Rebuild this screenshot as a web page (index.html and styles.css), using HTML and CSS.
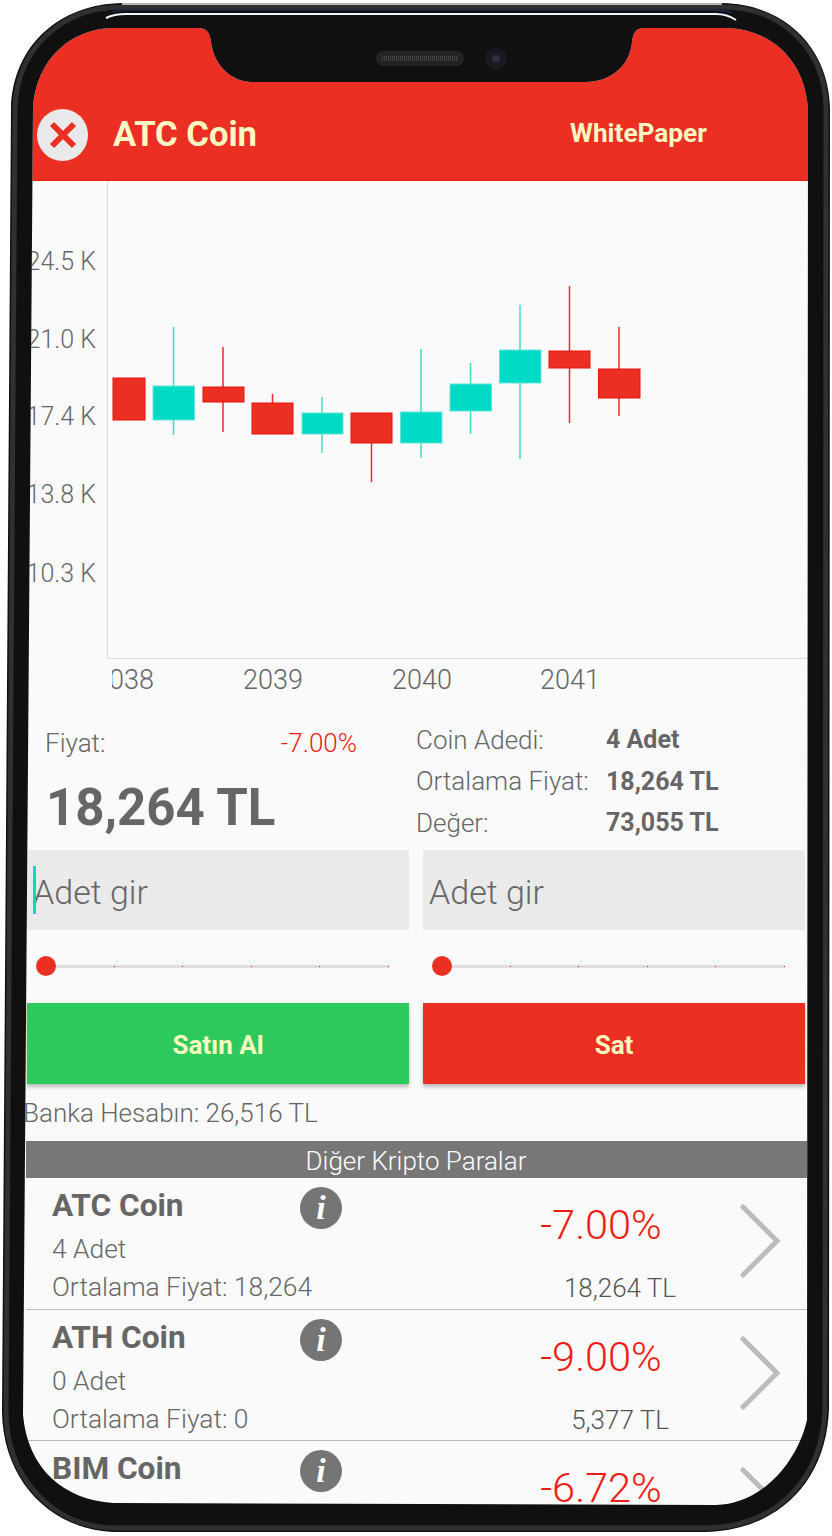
FILE: index.html
```html
<!DOCTYPE html>
<html lang="tr">

<head>
    <meta charset="UTF-8">
    <meta name="viewport" content="width=device-width, initial-scale=1.0">
    <title>ATC Coin</title>
    <link rel="stylesheet" href="styles.css">
</head>

<body>
    <div class="phone">
        <div class="screen">
            <div class="header">
                <div class="close">
                    <svg width="30" height="30" viewBox="0 0 30 30">
                        <path class="close-x" d="M4 4 L26 26 M26 4 L4 26" />
                    </svg>
                </div>
                <div class="title">ATC Coin</div>
                <div class="paper">WhitePaper</div>
            </div>

            <svg class="chart" width="832" height="519" viewBox="0 181 832 519">
                <defs>
                    <clipPath id="xclip">
                        <rect x="112" y="660" width="700" height="40" />
                    </clipPath>
                </defs>
                <path class="axis" d="M107.5 181 V658.5 H808" />

                <text class="ylabel" x="96" y="270">24.5 K</text>
                <text class="ylabel" x="96" y="348">21.0 K</text>
                <text class="ylabel" x="96" y="425">17.4 K</text>
                <text class="ylabel" x="96" y="503">13.8 K</text>
                <text class="ylabel" x="96" y="582">10.3 K</text>

                <g clip-path="url(#xclip)">
                    <text class="xlabel" x="124" y="689">2038</text>
                    <text class="xlabel" x="273" y="689">2039</text>
                    <text class="xlabel" x="422" y="689">2040</text>
                    <text class="xlabel" x="570" y="689">2041</text>
                </g>

                <!-- mumlar -->
                <rect class="red" x="113" y="378" width="32" height="42" />

                <path class="wick-teal" d="M173.5 327 V435" />
                <rect class="teal" x="153" y="386" width="41.5" height="34" />

                <path class="wick-red" d="M223 347 V432" />
                <rect class="red" x="203" y="387" width="41" height="15" />

                <path class="wick-red" d="M272.5 394 V403" />
                <rect class="red" x="252" y="403" width="41" height="31" />

                <path class="wick-teal" d="M322 397 V453" />
                <rect class="teal" x="302" y="413" width="41" height="21" />

                <path class="wick-red" d="M371.5 443 V482" />
                <rect class="red" x="351" y="413" width="41" height="30" />

                <path class="wick-teal" d="M421 349 V458" />
                <rect class="teal" x="400.5" y="412" width="41.5" height="31" />

                <path class="wick-teal" d="M470.5 363 V434" />
                <rect class="teal" x="450" y="384" width="41.5" height="27" />

                <path class="wick-teal" d="M520 305 V459" />
                <rect class="teal" x="499.5" y="350" width="41.5" height="33" />

                <path class="wick-red" d="M569.5 286 V423" />
                <rect class="red" x="549" y="351" width="41" height="17" />

                <path class="wick-red" d="M619 327 V416" />
                <rect class="red" x="598.5" y="369" width="41.5" height="29" />
            </svg>

            <div class="info">
                <div class="price-box">
                    <div class="price-top">
                        <span>Fiyat:</span>
                        <span class="loss">-7.00%</span>
                    </div>
                    <div class="price">18,264 TL</div>
                </div>
                <div class="stats">
                    <div class="stat"><span class="stat-name">Coin Adedi:</span><b>4 Adet</b></div>
                    <div class="stat"><span class="stat-name">Ortalama Fiyat:</span><b>18,264 TL</b></div>
                    <div class="stat"><span class="stat-name">Değer:</span><b>73,055 TL</b></div>
                </div>
            </div>

            <div class="trade">
                <div class="side">
                    <div class="field">
                        <input type="text" placeholder="Adet gir">
                        <span class="caret"></span>
                    </div>
                    <div class="slider">
                        <div class="track">
                            <span class="thumb"></span>
                            <i></i><i></i><i></i><i></i><i></i>
                        </div>
                    </div>
                    <button class="btn btn-buy">Satın Al</button>
                </div>
                <div class="side">
                    <div class="field">
                        <input type="text" placeholder="Adet gir">
                    </div>
                    <div class="slider">
                        <div class="track">
                            <span class="thumb"></span>
                            <i></i><i></i><i></i><i></i><i></i>
                        </div>
                    </div>
                    <button class="btn btn-sell">Sat</button>
                </div>
            </div>

            <div class="bank">Banka Hesabın: 26,516 TL</div>

            <div class="list">
                <div class="list-title">Diğer Kripto Paralar</div>

                <div class="coin">
                    <div class="coin-main">
                        <div class="coin-name">ATC Coin</div>
                        <div class="coin-line">4 Adet</div>
                        <div class="coin-line">Ortalama Fiyat: 18,264</div>
                    </div>
                    <div class="info-icon">i</div>
                    <div class="coin-values">
                        <div class="coin-pct">-7.00%</div>
                        <div class="coin-val">18,264 TL</div>
                    </div>
                    <svg class="chev" width="42" height="74" viewBox="0 0 42 74">
                        <path d="M3 3 L37 37 L3 71" />
                    </svg>
                </div>

                <div class="coin">
                    <div class="coin-main">
                        <div class="coin-name">ATH Coin</div>
                        <div class="coin-line">0 Adet</div>
                        <div class="coin-line">Ortalama Fiyat: 0</div>
                    </div>
                    <div class="info-icon">i</div>
                    <div class="coin-values">
                        <div class="coin-pct">-9.00%</div>
                        <div class="coin-val">5,377 TL</div>
                    </div>
                    <svg class="chev" width="42" height="74" viewBox="0 0 42 74">
                        <path d="M3 3 L37 37 L3 71" />
                    </svg>
                </div>

                <div class="coin">
                    <div class="coin-main">
                        <div class="coin-name">BIM Coin</div>
                    </div>
                    <div class="info-icon">i</div>
                    <div class="coin-values">
                        <div class="coin-pct">-6.72%</div>
                    </div>
                    <svg class="chev" width="42" height="74" viewBox="0 0 42 74">
                        <path d="M3 3 L37 37 L3 71" />
                    </svg>
                </div>
            </div>
        </div>

        <!-- telefon cercevesi -->
        <svg class="frame" width="832" height="1536" viewBox="0 0 832 1536">
            <path class="frame-out" fill-rule="evenodd" d="M0 0 H832 V1536 H0 Z
                M33 108 C36 60 70 29 112 28 H198 C207 28 210 33 211 42 C214 66 232 82 252 82 H586 C610 82 630 66 632 42 C633 33 636 28 644 28 H726 C772 29 806 62 808 110 L807 1420 C795 1470 755 1505 716 1505 L113 1503 C65 1500 28 1470 23 1415 Z" />
            <path class="frame-body" fill-rule="evenodd" d="M11 108 C13 45 60 4 122 3 H722 C785 4 829 48 830 108 L829 1408 C827 1480 780 1530 705 1532 H115 C50 1530 3 1480 2 1412 Z
                M33 108 C36 60 70 29 112 28 H198 C207 28 210 33 211 42 C214 66 232 82 252 82 H586 C610 82 630 66 632 42 C633 33 636 28 644 28 H726 C772 29 806 62 808 110 L807 1420 C795 1470 755 1505 716 1505 L113 1503 C65 1500 28 1470 23 1415 Z" />
            <path class="frame-edge" d="M15 108 C17 48 62 7 122 7 H722 C783 7 825 50 826 108 L825 1408 C823 1478 778 1527 705 1528 H115 C52 1527 7 1478 6 1412 Z" />
            <path class="frame-rim" d="M122 4 H722" />
            <path class="frame-glass-dark" d="M112 12 C116 11 120 10 126 10 H716 C722 10 728 11 732 13" />
            <path class="frame-glass" d="M106 18 C112 15 118 14 126 14 H716 C724 14 730 16 736 20" />
            <rect class="speaker" x="376" y="51" width="88" height="15" rx="7" />
            <path class="speaker-mesh" d="M382 58.5 H458" />
            <circle class="camera" cx="496" cy="59" r="11" />
            <circle class="camera-lens" cx="496" cy="59" r="4" />
        </svg>
    </div>
</body>

</html>
```

FILE: styles.css
```css
* {
    box-sizing: border-box;
}

body {
    margin: 0;
    background-color: #fff;
    font-family: Roboto, Lato, sans-serif;
    font-weight: 300;
    color: #666;
}

.phone {
    position: relative;
    width: 832px;
    height: 1536px;
    overflow: hidden;
}

.screen {
    height: 1536px;
    overflow: hidden;
    background-color: #fafafa;
}

.frame {
    position: absolute;
    left: 0;
    top: 0;
}

.frame-out {
    fill: #fff;
}

.frame-body {
    fill: #101010;
}

.frame-edge {
    fill: none;
    stroke: #303030;
    stroke-width: 5;
}

.frame-rim {
    stroke: #b4b4b4;
    stroke-width: 2;
}

.frame-glass-dark {
    fill: none;
    stroke: #1c2340;
    stroke-width: 2;
}

.frame-glass {
    fill: none;
    stroke: #f4f5f8;
    stroke-width: 2;
}

.speaker {
    fill: #232325;
}

.speaker-mesh {
    stroke: #46464a;
    stroke-width: 5;
    stroke-dasharray: 1 1;
}

.camera {
    fill: #191a20;
}

.camera-lens {
    fill: #2a2d3c;
}

/* header */
.header {
    display: flex;
    align-items: center;
    height: 181px;
    padding: 90px 0 0 37px;
    background-color: #ec2f23;
    border-bottom: 1px solid #ee1c14;
    color: #fff9c4;
    font-weight: 700;
}

.close {
    display: flex;
    align-items: center;
    justify-content: center;
    width: 51px;
    height: 52px;
    border-radius: 50%;
    background-color: #e9e9e9;
}

.close-x {
    fill: none;
    stroke: #ec2f23;
    stroke-width: 6;
}

.title {
    margin: -2px 0 0 25px;
    font-size: 34.6px;
}

.paper {
    margin: -4px 0 0 313px;
    font-size: 26.2px;
}

/* chart */
.chart {
    display: block;
}

.axis {
    fill: none;
    stroke: #ddd;
    stroke-width: 1;
}

.ylabel,
.xlabel {
    fill: #666;
    font-size: 25px;
}

.ylabel {
    text-anchor: end;
}

.xlabel {
    font-size: 27px;
    text-anchor: middle;
}

.red {
    fill: #ec2f23;
    stroke: #e8120c;
    stroke-width: 1;
}

.teal {
    fill: #00dac6;
    stroke: #5fe6d8;
    stroke-width: 1;
}

.wick-red {
    stroke: #ee2a24;
    stroke-width: 1.5;
}

.wick-teal {
    stroke: #3cdccb;
    stroke-width: 1.5;
}

/* info */
.info {
    display: flex;
    height: 150px;
    padding: 19px 0 0 45px;
    font-size: 26px;
}

.price-box {
    width: 371px;
}

.price-top {
    display: flex;
    justify-content: space-between;
    width: 312px;
    padding-top: 9px;
}

.loss {
    color: #ee1c14;
}

.price {
    margin: 20px 0 0 1px;
    font-size: 51px;
    font-weight: 700;
}

.stat {
    display: flex;
    align-items: center;
    height: 41.5px;
}

.stat-name {
    width: 190px;
}

.stat b {
    font-size: 25px;
    font-weight: 700;
}

/* buy and sell */
.trade {
    display: flex;
    gap: 14px;
    padding-left: 27px;
}

.side {
    width: 382px;
}

.field {
    position: relative;
    height: 80px;
}

.field input {
    display: block;
    width: 100%;
    height: 100%;
    padding: 4px 6px 0;
    border: none;
    border-radius: 0;
    background-color: #eaeaea;
    font-family: inherit;
    font-size: 34px;
    font-weight: 300;
    color: #666;
}

.field input::placeholder {
    color: #666;
    opacity: 1;
}

.caret {
    position: absolute;
    left: 6px;
    top: 16px;
    width: 3px;
    height: 48px;
    background-color: #00dac6;
}

.slider {
    height: 73px;
    padding: 35px 0 0 19px;
}

.track {
    position: relative;
    display: flex;
    width: 343px;
    height: 3px;
    background-color: #ddd;
}

.track i {
    flex: 1;
    height: 3px;
    position: relative;
}

.track i::after {
    content: "";
    position: absolute;
    right: 0;
    top: 1px;
    width: 1px;
    height: 1px;
    background-color: #ee1c14;
}

.thumb {
    position: absolute;
    left: -10px;
    top: -9px;
    width: 20px;
    height: 20px;
    border-radius: 50%;
    background-color: #ec2f23;
}

.btn {
    display: block;
    width: 100%;
    height: 81px;
    padding-top: 4px;
    border: none;
    border-radius: 0;
    box-shadow: 0 3px 4px rgba(0, 0, 0, 0.25);
    font-family: inherit;
    font-size: 26px;
    font-weight: 700;
    color: #fffcc0;
}

.btn-buy {
    background-color: #2ec95c;
}

.btn-sell {
    background-color: #ec2f23;
}

.bank {
    height: 57px;
    padding: 14px 0 0 23px;
    font-size: 26px;
}

/* coin list */
.list {
    margin-left: 26px;
}

.list-title {
    height: 37px;
    padding-right: 26px;
    background-color: #777;
    color: #fff;
    font-size: 26px;
    line-height: 41px;
    text-align: center;
}

.coin {
    display: flex;
    height: 131.5px;
    padding-left: 26px;
    border-bottom: 1.5px solid #bbb;
}

.coin-main {
    width: 248px;
    padding-top: 9px;
}

.coin-name {
    height: 44px;
    font-size: 31.6px;
    font-weight: 700;
}

.coin-line {
    height: 38px;
    padding-top: 3px;
    font-size: 26.4px;
    white-space: nowrap;
}

.info-icon {
    width: 42px;
    height: 42px;
    margin-top: 9px;
    border-radius: 50%;
    background-color: #757575;
    color: #fff;
    font-family: "Liberation Serif", serif;
    font-size: 34px;
    font-style: italic;
    font-weight: 700;
    line-height: 42px;
    text-align: center;
}

.coin-values {
    width: 398px;
    padding-left: 158px;
    text-align: center;
}

.coin-pct {
    height: 70px;
    padding: 22px 38px 0 0;
    font-size: 41.5px;
    color: #ee1c14;
}

.coin-val {
    padding: 25px 0 0 0;
    font-size: 26px;
    color: #555;
}

.chev {
    margin: 26px 0 0 0;
    flex: none;
}

.chev path {
    fill: none;
    stroke: #bcbcbc;
    stroke-width: 5;
    stroke-linecap: round;
}
```
